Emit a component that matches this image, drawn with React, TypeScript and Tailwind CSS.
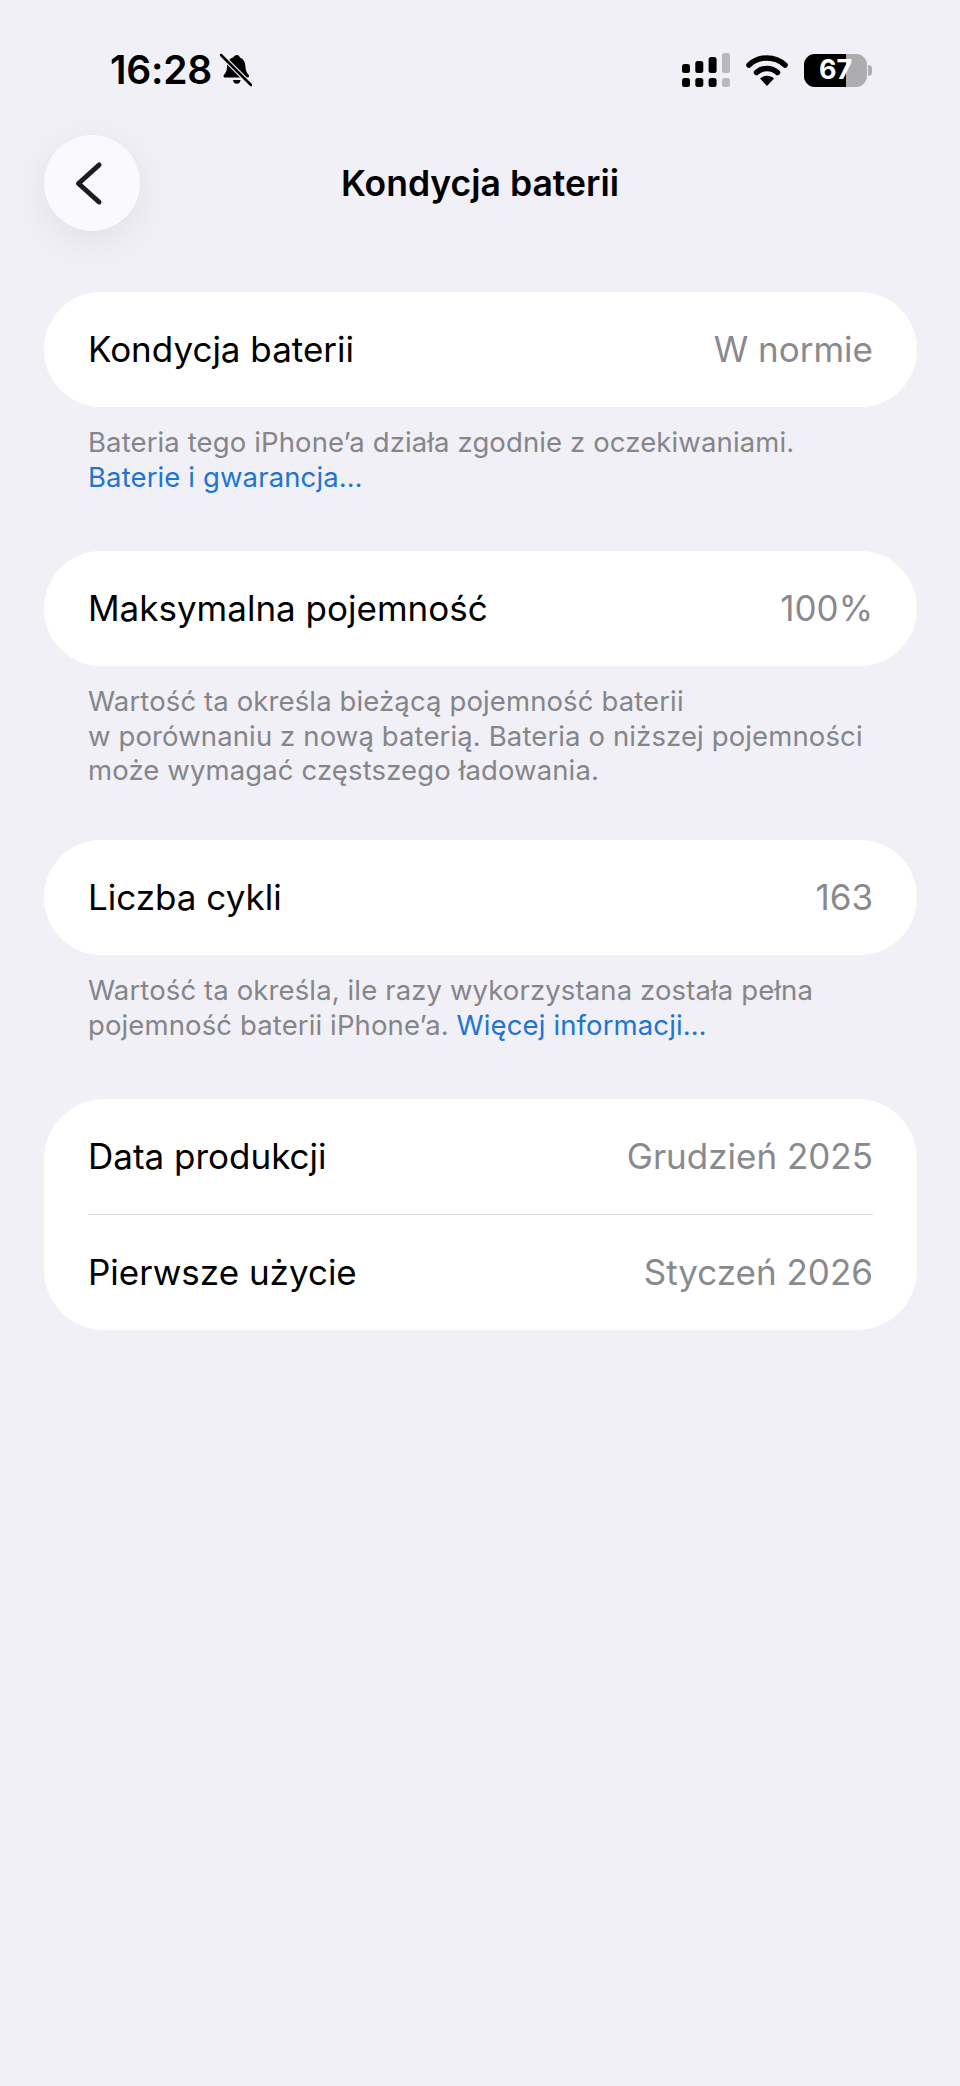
const font = { fontFamily: "Inter, 'Noto Sans', sans-serif" };

function Row({ label, value }: { label: string; value: string }) {
  return (
    <div className="flex h-[115px] items-center justify-between">
      <span className="text-[35px] text-black">{label}</span>
      <span className="text-[35px] text-[#8a8a8e]">{value}</span>
    </div>
  );
}

function Card({ label, value }: { label: string; value: string }) {
  return (
    <div className="rounded-[57px] bg-white px-11">
      <Row label={label} value={value} />
    </div>
  );
}

function Note({ children, className }: { children: React.ReactNode; className: string }) {
  return (
    <p className={`mt-[18px] px-11 text-[27.5px] leading-[34.5px] tracking-[0.12px] text-[#85858a] ${className}`}>{children}</p>
  );
}

const Link = ({ children }: { children: React.ReactNode }) => <span className="text-[#2075d2]">{children}</span>;

export default function App() {
  return (
    <div className="min-h-[2086px] w-[960px] bg-[#f0f0f6]" style={font}>
      <div className="flex h-[135px] items-start justify-between pl-[110px] pr-[88px] pt-[46px]">
        <div className="flex items-center gap-2">
          <span className="text-[39px] font-semibold leading-[48px] tracking-[-0.2px] text-black">16:28</span>
          <svg width="32" height="34" viewBox="0 0 32 34">
            <path d="M17 2c1.600 0 2.600 1 2.800 2.400 3.600 1.200 5.400 4.400 5.600 8.600.2 4.600 1.200 6.800 3.200 8.800 1 1.100.4 2.700-1 2.700H5c-1.400 0-2-1.600-1-2.700 2-2 3-4.200 3-8.800 0-4.200 2-7.400 6-8.600C14 3 15.400 2 17 2z" fill="#000" />
            <path d="M13 27h7.500c0 2.200-1.600 3.800-3.750 3.800S13 29.200 13 27z" fill="#000" />
            <path d="M1 2 31 32" stroke="#f0f0f6" strokeWidth="5" />
            <path d="M1 2 31 32" stroke="#000" strokeWidth="2.500" strokeLinecap="round" />
          </svg>
        </div>
        <div className="flex items-center gap-[16px] pt-[7px]">
          <svg width="48" height="34" viewBox="0 0 48 34">
            <rect x="0" y="11" width="8" height="9" rx="2.500" fill="#000" />
            <rect x="13.300" y="8" width="8" height="12" rx="2.500" fill="#000" />
            <rect x="26.600" y="4" width="8" height="16" rx="2.500" fill="#000" />
            <rect x="40" y="0" width="8" height="20" rx="2.500" fill="#b9b9bd" />
            <rect x="0" y="25" width="8" height="9" rx="2.500" fill="#000" />
            <rect x="13.300" y="25" width="8" height="9" rx="2.500" fill="#000" />
            <rect x="26.600" y="25" width="8" height="9" rx="2.500" fill="#000" />
            <rect x="40" y="25" width="8" height="9" rx="2.500" fill="#b9b9bd" />
          </svg>
          <svg width="42" height="32" viewBox="0 0 42 32">
            <path d="M3 11c10-9.500 26-9.500 36 0" fill="none" stroke="#000" strokeWidth="5.500" strokeLinecap="round" />
            <path d="M10.500 18.500c6-5.500 15-5.500 21 0" fill="none" stroke="#000" strokeWidth="5.500" strokeLinecap="round" />
            <path d="M14 24.500c4-3.600 10-3.600 14 0L21 32z" fill="#000" />
          </svg>
          <div className="flex items-center gap-[1px]">
            <div className="relative flex h-[33px] w-[63px] items-center overflow-hidden rounded-[11px] bg-[#adadb1]">
              <div className="h-full w-[42px] bg-black" />
              <span className="absolute inset-0 flex items-center justify-center text-[27px] font-bold text-white">67</span>
            </div>
            <div className="h-[11px] w-[4px] rounded-r-full bg-[#adadb1]" />
          </div>
        </div>
      </div>

      <div className="relative flex h-[157px] items-start justify-center">
        <button className="absolute left-11 top-0 flex h-24 w-24 items-center justify-center rounded-full bg-[#fafafe] shadow-[0_10px_40px_rgba(0,0,0,0.07)]">
          <svg width="96" height="96" viewBox="0 0 96 96" fill="none">
            <path d="M55 30 34.500 48.500 55 67" stroke="#1c1c1e" strokeWidth="5" strokeLinecap="round" strokeLinejoin="round" />
          </svg>
        </button>
        <h1 className="mt-[28px] text-[35.5px] font-semibold leading-[42px] text-black">Kondycja baterii</h1>
      </div>

      <div className="pl-11 pr-[43px]">
        <Card label="Kondycja baterii" value="W normie" />
        <Note className="mb-[57px]">
          Bateria tego iPhone’a działa zgodnie z oczekiwaniami.
          <br />
          <Link>Baterie i gwarancja…</Link>
        </Note>
        <Card label="Maksymalna pojemność" value="100%" />
        <Note className="mb-[52.5px]">
          Wartość ta określa bieżącą pojemność baterii
          <br />w porównaniu z nową baterią. Bateria o niższej pojemności
          <br />może wymagać częstszego ładowania.
        </Note>
        <Card label="Liczba cykli" value="163" />
        <Note className="mb-[57px]">
          Wartość ta określa, ile razy wykorzystana została pełna
          <br />pojemność baterii iPhone’a. <Link>Więcej informacji…</Link>
        </Note>
        <div className="rounded-[60px] bg-white px-11">
          <Row label="Data produkcji" value="Grudzień 2025" />
          <div className="h-[1px] bg-[#d8d8da]" />
          <Row label="Pierwsze użycie" value="Styczeń 2026" />
        </div>
      </div>
    </div>
  );
}
